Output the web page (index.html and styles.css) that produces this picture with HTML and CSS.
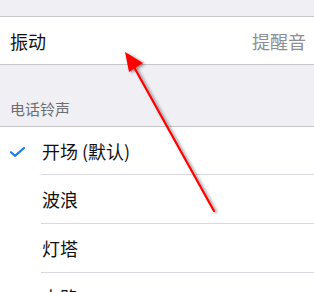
FILE: index.html
```html
<!DOCTYPE html>
<html lang="zh-CN">
<head>
<meta charset="utf-8">
<link rel="stylesheet" href="styles.css">
</head>
<body>
<div class="page">
  <div class="spacer-top"></div>
  <div class="group">
    <div class="cell">
      <span class="cell-title">振动</span>
      <span class="cell-detail">提醒音</span>
    </div>
  </div>
  <div class="section-header">电话铃声</div>
  <div class="group">
    <div class="list-row">
      <div class="check-cell">
        <svg class="check" width="15" height="10" viewBox="0 0 15 10"><path d="M1 5.2 L5 8.8 L14 1" fill="none" stroke="#1a7cf0" stroke-width="2.2" stroke-linecap="round" stroke-linejoin="round"/></svg>
      </div>
      <div class="row-body">开场 (默认)</div>
    </div>
    <div class="list-row">
      <div class="check-cell"></div>
      <div class="row-body">波浪</div>
    </div>
    <div class="list-row">
      <div class="check-cell"></div>
      <div class="row-body">灯塔</div>
    </div>
    <div class="list-row">
      <div class="check-cell"></div>
      <div class="row-body">电路</div>
    </div>
  </div>
  <svg class="annotation" width="314" height="292" viewBox="0 0 314 292">
    <defs>
      <filter id="sh" x="-20%" y="-20%" width="140%" height="140%">
        <feDropShadow dx="2" dy="1" stdDeviation="1.4" flood-color="#000" flood-opacity="0.45"/>
      </filter>
    </defs>
    <g filter="url(#sh)">
      <line x1="134" y1="67" x2="214" y2="211" stroke="#ff0000" stroke-width="2.2" stroke-linecap="round"/>
      <polygon points="125,52 143,63 129,72" fill="#ff0000"/>
    </g>
  </svg>
</div>
</body>
</html>
```

FILE: styles.css
```css
html, body {
  margin: 0;
  padding: 0;
}
body {
  background: #efeff4;
  font-family: "Noto Sans CJK SC", "Noto Sans", sans-serif;
  width: 314px;
  height: 292px;
  overflow: hidden;
}
.page {
  position: relative;
  width: 314px;
  height: 292px;
  overflow: hidden;
}
.spacer-top {
  height: 16px;
}
.group {
  background: #ffffff;
  border-top: 1px solid #c8c7cc;
  border-bottom: 1px solid #c8c7cc;
}
.cell {
  height: 47px;
  display: flex;
  align-items: center;
  justify-content: space-between;
  padding: 0 8px 0 10px;
}
.cell-title {
  font-size: 18px;
  color: #111;
}
.cell-detail {
  font-size: 18px;
  color: #8e8e93;
}
.section-header {
  height: 61px;
  box-sizing: border-box;
  padding: 0 0 7px 10px;
  display: flex;
  align-items: flex-end;
  font-size: 15px;
  color: #6d6d72;
}
.list-row {
  display: flex;
  height: 49px;
}
.list-row:first-child {
  height: 48px;
}
.check-cell {
  width: 41px;
  flex: none;
  display: flex;
  align-items: center;
  padding-left: 10px;
  box-sizing: border-box;
}
.check {
  display: block;
  margin-top: 2px;
}
.row-body {
  flex: 1;
  display: flex;
  align-items: center;
  padding-left: 1px;
  font-size: 18px;
  color: #111;
  border-bottom: 1px solid #d9d9dd;
}
.list-row:first-child .row-body {
  padding-top: 1px;
}
.annotation {
  position: absolute;
  left: 0;
  top: 0;
  pointer-events: none;
}
```
